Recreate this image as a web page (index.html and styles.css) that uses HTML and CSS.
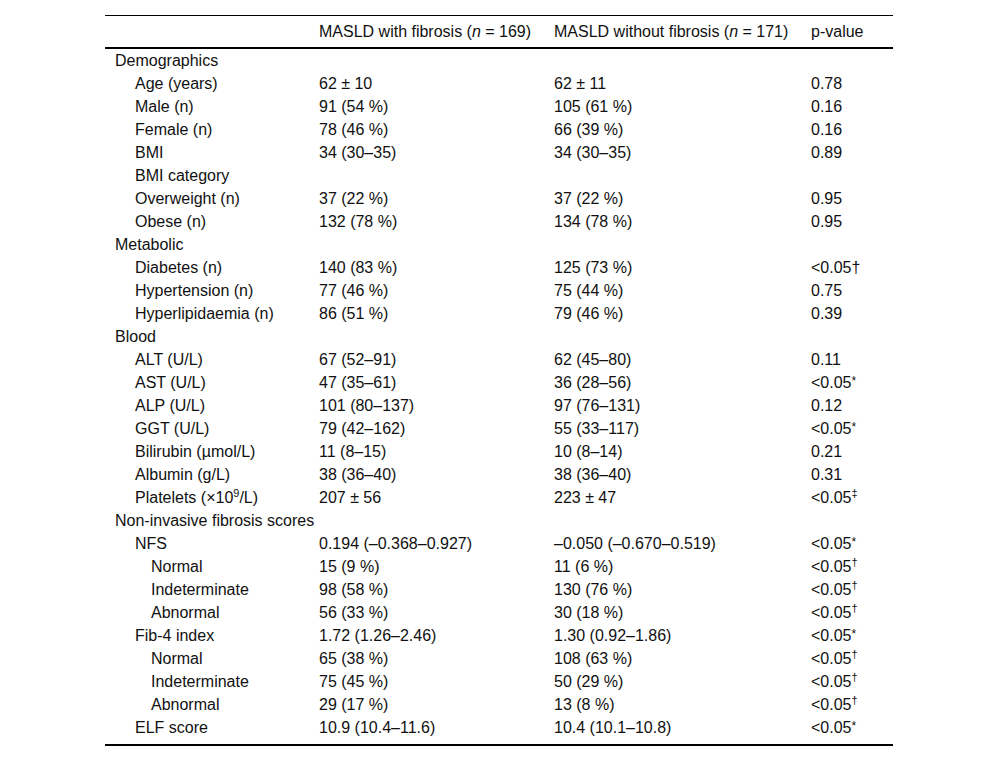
FILE: index.html
```html
<!DOCTYPE html>
<html>
<head>
<meta charset="utf-8">
<link rel="stylesheet" href="styles.css">
</head>
<body>
<table class="tbl">
<colgroup><col class="c1"><col class="c2"><col class="c3"><col class="c4"></colgroup>
<thead>
<tr><th></th><th>MASLD with fibrosis (<i>n</i> = 169)</th><th>MASLD without fibrosis (<i>n</i> = 171)</th><th>p-value</th></tr>
</thead>
<tbody>
<tr><td class="l0">Demographics</td><td></td><td></td><td></td></tr>
<tr><td class="l1">Age (years)</td><td>62 ± 10</td><td>62 ± 11</td><td>0.78</td></tr>
<tr><td class="l1">Male (n)</td><td>91 (54 %)</td><td>105 (61 %)</td><td>0.16</td></tr>
<tr><td class="l1">Female (n)</td><td>78 (46 %)</td><td>66 (39 %)</td><td>0.16</td></tr>
<tr><td class="l1">BMI</td><td>34 (30–35)</td><td>34 (30–35)</td><td>0.89</td></tr>
<tr><td class="l1">BMI category</td><td></td><td></td><td></td></tr>
<tr><td class="l1">Overweight (n)</td><td>37 (22 %)</td><td>37 (22 %)</td><td>0.95</td></tr>
<tr><td class="l1">Obese (n)</td><td>132 (78 %)</td><td>134 (78 %)</td><td>0.95</td></tr>
<tr><td class="l0">Metabolic</td><td></td><td></td><td></td></tr>
<tr><td class="l1">Diabetes (n)</td><td>140 (83 %)</td><td>125 (73 %)</td><td>&lt;0.05†</td></tr>
<tr><td class="l1">Hypertension (n)</td><td>77 (46 %)</td><td>75 (44 %)</td><td>0.75</td></tr>
<tr><td class="l1">Hyperlipidaemia (n)</td><td>86 (51 %)</td><td>79 (46 %)</td><td>0.39</td></tr>
<tr><td class="l0">Blood</td><td></td><td></td><td></td></tr>
<tr><td class="l1">ALT (U/L)</td><td>67 (52–91)</td><td>62 (45–80)</td><td>0.11</td></tr>
<tr><td class="l1">AST (U/L)</td><td>47 (35–61)</td><td>36 (28–56)</td><td>&lt;0.05<sup class="ast">*</sup></td></tr>
<tr><td class="l1">ALP (U/L)</td><td>101 (80–137)</td><td>97 (76–131)</td><td>0.12</td></tr>
<tr><td class="l1">GGT (U/L)</td><td>79 (42–162)</td><td>55 (33–117)</td><td>&lt;0.05<sup class="ast">*</sup></td></tr>
<tr><td class="l1">Bilirubin (µmol/L)</td><td>11 (8–15)</td><td>10 (8–14)</td><td>0.21</td></tr>
<tr><td class="l1">Albumin (g/L)</td><td>38 (36–40)</td><td>38 (36–40)</td><td>0.31</td></tr>
<tr><td class="l1">Platelets (×10<sup>9</sup>/L)</td><td>207 ± 56</td><td>223 ± 47</td><td>&lt;0.05<sup>‡</sup></td></tr>
<tr><td class="l0">Non-invasive fibrosis scores</td><td></td><td></td><td></td></tr>
<tr><td class="l1">NFS</td><td>0.194 (–0.368–0.927)</td><td>–0.050 (–0.670–0.519)</td><td>&lt;0.05<sup class="ast">*</sup></td></tr>
<tr><td class="l2">Normal</td><td>15 (9 %)</td><td>11 (6 %)</td><td>&lt;0.05<sup>†</sup></td></tr>
<tr><td class="l2">Indeterminate</td><td>98 (58 %)</td><td>130 (76 %)</td><td>&lt;0.05<sup>†</sup></td></tr>
<tr><td class="l2">Abnormal</td><td>56 (33 %)</td><td>30 (18 %)</td><td>&lt;0.05<sup>†</sup></td></tr>
<tr><td class="l1">Fib-4 index</td><td>1.72 (1.26–2.46)</td><td>1.30 (0.92–1.86)</td><td>&lt;0.05<sup class="ast">*</sup></td></tr>
<tr><td class="l2">Normal</td><td>65 (38 %)</td><td>108 (63 %)</td><td>&lt;0.05<sup>†</sup></td></tr>
<tr><td class="l2">Indeterminate</td><td>75 (45 %)</td><td>50 (29 %)</td><td>&lt;0.05<sup>†</sup></td></tr>
<tr><td class="l2">Abnormal</td><td>29 (17 %)</td><td>13 (8 %)</td><td>&lt;0.05<sup>†</sup></td></tr>
<tr class="last"><td class="l1">ELF score</td><td>10.9 (10.4–11.6)</td><td>10.4 (10.1–10.8)</td><td>&lt;0.05<sup class="ast">*</sup></td></tr>
</tbody>
</table>
</body>
</html>
```

FILE: styles.css
```css
html, body {
  margin: 0;
  padding: 0;
  background: #fff;
}
body {
  font-family: "Liberation Sans", Arial, sans-serif;
  font-size: 16px;
  color: #111;
}
.tbl {
  margin: 15px 0 0 105px;
  width: 788px;
  border-collapse: collapse;
  table-layout: fixed;
  border-top: 1px solid #000;
  border-bottom: 2px solid #000;
}
.c1 { width: 204px; }
.c2 { width: 235px; }
.c3 { width: 257px; }
.c4 { width: 92px; }
th, td {
  text-align: left;
  font-weight: normal;
  padding: 0 0 0 10px;
  height: 23px;
  line-height: 23px;
  white-space: nowrap;
  vertical-align: middle;
}
thead th {
  height: 31px;
  border-bottom: 2px solid #000;
}
td.l0 { padding-left: 10px; }
td.l1 { padding-left: 30px; }
td.l2 { padding-left: 46px; }
tr.last td { height: 23px; padding-bottom: 5px; }
sup {
  font-size: 11px;
  line-height: 0;
  vertical-align: 6px;
}
sup.ast {
  font-size: 12px;
  vertical-align: 3px;
}
```
